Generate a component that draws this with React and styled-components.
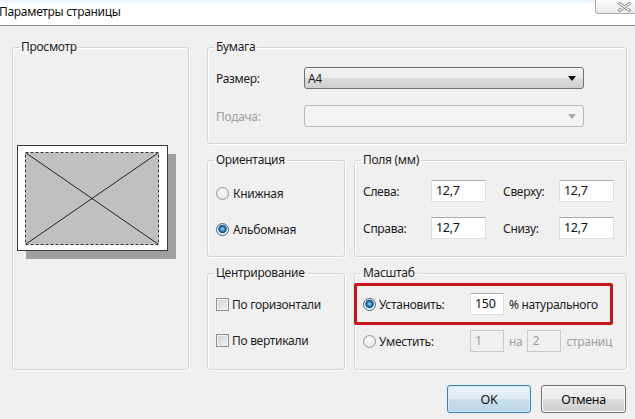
import React from "react";
import styled, { createGlobalStyle } from "styled-components";

const Global = createGlobalStyle`
  html, body {
    margin: 0;
    padding: 0;
    background: #f0f0f0;
  }
  body {
    width: 635px;
    height: 419px;
    overflow: hidden;
    font-family: "Noto Sans", "Open Sans", sans-serif;
    font-size: 12px;
    letter-spacing: -0.3px;
    color: #1e1e1e;
  }
`;

const Window = styled.div`
  width: 635px;
  height: 419px;
  display: flex;
  flex-direction: column;
  background: #f0f0f0;
`;

const TitleBar = styled.div`
  height: 25px;
  flex: none;
  display: flex;
  align-items: flex-start;
  background: linear-gradient(#e9f1f9 0px, #ffffff 4px, #ffffff 100%);
  border-bottom: 1px solid #8c8c8c;
`;

const Title = styled.div`
  line-height: 24px;
  font-size: 12px;
  margin-left: -1px;
  color: #111;
`;

const CloseButton = styled.div`
  margin-left: auto;
  width: 40px;
  height: 14px;
  border: 1px solid #a9a9a9;
  border-top: none;
  border-right: none;
  border-bottom-left-radius: 4px;
  background: linear-gradient(#fbfbfb, #ececec);
  display: flex;
  align-items: center;
  justify-content: flex-end;
  padding-right: 4px;
  box-sizing: border-box;
`;

const Body = styled.div`
  flex: 1;
  padding: 13px 8px 0 12px;
  display: flex;
  flex-direction: column;
`;

const MainGrid = styled.div`
  display: grid;
  grid-template-columns: 177px 420px;
  grid-template-rows: 105px 105px 105px;
  column-gap: 18px;
  row-gap: 8px;
`;

const SubRow = styled.div`
  display: grid;
  grid-template-columns: 138px 273px;
  column-gap: 9px;
`;

const Group = styled.fieldset`
  margin: 0;
  min-width: 0;
  box-sizing: border-box;
  height: 100%;
  border: 1px solid #d5d5d5;
  border-radius: 3px;
  box-shadow: inset 1px 1px 0 #ffffff, 1px 1px 0 #ffffff;
  padding: ${(p) => p.$pt || 12}px 8px 0 8px;
  grid-row: ${(p) => p.$span || "auto"};
`;

const Legend = styled.legend`
  padding: 0 2px;
  margin-left: -2px;
  line-height: 16px;
  color: #1e1e1e;
`;

const Preview = styled.svg`
  display: block;
  margin: 78px 0 0 -4px;
`;

const PaperGrid = styled.div`
  display: grid;
  grid-template-columns: 88px 280px;
  grid-auto-rows: 22px;
  row-gap: 16px;
  align-items: center;
`;

const Label = styled.span`
  color: ${(p) => (p.$disabled ? "#a0a0a0" : "#1e1e1e")};
  white-space: nowrap;
  flex: none;
  padding-left: ${(p) => p.$pl || 0}px;
`;

const Combo = styled.div`
  height: 22px;
  box-sizing: border-box;
  border: 1px solid ${(p) => (p.$disabled ? "#b9bcbe" : "#707070")};
  border-radius: 3px;
  background: ${(p) =>
    p.$disabled
      ? "#f4f4f4"
      : "linear-gradient(#f3f3f3 0%, #ebebeb 50%, #dddddd 51%, #cfcfcf 100%)"};
  display: flex;
  align-items: center;
  padding: 0 7px 0 3px;
`;

const ComboText = styled.span`
  flex: 1;
`;

const List = styled.div`
  display: flex;
  flex-direction: column;
  gap: 16px;
`;

const OptionRow = styled.div`
  height: 20px;
  display: flex;
  align-items: center;
  gap: ${(p) => p.$gap || 4}px;
`;

const Radio = styled.span`
  width: 13px;
  height: 13px;
  flex: none;
  box-sizing: border-box;
  border-radius: 50%;
  border: 1px solid ${(p) => (p.$checked ? "#3b6a8e" : "#969696")};
  background: ${(p) =>
    p.$checked
      ? "radial-gradient(circle at 50% 45%, #a6dcf7 0px, #2a7db6 2.3px, #1d4f75 3.8px, #e4eaee 4.6px, #ffffff 100%)"
      : "radial-gradient(circle at 50% 40%, #ffffff 0px, #dcdcdc 100%)"};
`;

const Check = styled.span`
  width: 13px;
  height: 13px;
  flex: none;
  box-sizing: border-box;
  border: 1px solid #8e8f8f;
  background: linear-gradient(135deg, #cfcfcf, #f4f4f4);
  box-shadow: inset 0 0 0 1px #f4f4f4;
`;

const MarginGrid = styled.div`
  display: grid;
  grid-template-columns: 68px 55px 73px 55px;
  grid-auto-rows: 22px;
  row-gap: 15px;
  align-items: center;
`;

const Field = styled.div`
  width: ${(p) => p.$w || 55}px;
  height: 22px;
  box-sizing: border-box;
  border: 1px solid ${(p) => (p.$disabled ? "#c9c9c9" : "#dbdfe6")};
  border-top-color: ${(p) => (p.$disabled ? "#c9c9c9" : "#abadb3")};
  background: ${(p) => (p.$disabled ? "#f0f0f0" : "#ffffff")};
  color: ${(p) => (p.$disabled ? "#a0a0a0" : "#111")};
  padding: 1px 0 0 4px;
  line-height: 17px;
  font-size: 12.5px;
  flex: none;
`;

const Highlight = styled.div`
  margin-left: -9px;
  width: 259px;
  height: 42px;
  box-sizing: border-box;
  border: 3px solid #c8141c;
  border-radius: 2px;
  padding-left: 6px;
  display: flex;
  align-items: center;
`;

const ScaleRow = styled.div`
  display: flex;
  align-items: center;
  gap: 5px;
  height: 22px;
  margin-top: ${(p) => p.$mt || 0}px;
`;

const RadioLabel = styled.div`
  display: flex;
  align-items: center;
  gap: 3px;
  width: 102px;
  flex: none;
`;

const Buttons = styled.div`
  display: flex;
  justify-content: flex-end;
  gap: 10px;
  margin-top: 15px;
  padding-right: 1px;
`;

const Button = styled.div`
  width: ${(p) => p.$w}px;
  height: 28px;
  box-sizing: border-box;
  border-radius: 3px;
  display: flex;
  align-items: center;
  justify-content: center;
  font-size: 12.5px;
  color: #111;
  border: 1px solid ${(p) => (p.$default ? "#3c7fb1" : "#707070")};
  background: ${(p) =>
    p.$default
      ? "linear-gradient(#eaf3fa 0%, #dbeaf5 50%, #c9dfee 51%, #bcd6ea 100%)"
      : "linear-gradient(#f2f2f2 0%, #ebebeb 50%, #dddddd 51%, #cfcfcf 100%)"};
  box-shadow: inset 0 0 0 1px ${(p) => (p.$default ? "#d6e9f7" : "#fbfbfb")};
`;

function Arrow({ disabled }) {
  return (
    <svg width="8" height="5" viewBox="0 0 8 5">
      <polygon points="0,0 8,0 4,5" fill={disabled ? "#a9a9a9" : "#111"} />
    </svg>
  );
}

function PagePreview() {
  return (
    <Preview width="162" height="116" viewBox="0 0 162 116">
      <rect x="9" y="9" width="150" height="105" fill="#a0a0a0" />
      <rect x="0.5" y="0.5" width="150" height="105" fill="#ffffff" stroke="#3a3a3a" />
      <rect
        x="8.5"
        y="7.5"
        width="133"
        height="92"
        fill="#c0c0c0"
        stroke="#333"
        strokeDasharray="3 2"
      />
      <line x1="9" y1="8" x2="141" y2="99" stroke="#111" strokeWidth="0.9" />
      <line x1="141" y1="8" x2="9" y2="99" stroke="#111" strokeWidth="0.9" />
    </Preview>
  );
}

export default function App() {
  return (
    <>
      <Global />
      <Window>
        <TitleBar>
          <Title>Параметры страницы</Title>
          <CloseButton>
            <svg width="13" height="10" viewBox="0 0 13 10">
              <path d="M1.5 1.5 L11.5 8.5 M11.5 1.5 L1.5 8.5" stroke="#8a8a8a" strokeWidth="3" strokeLinecap="round" />
              <path d="M1.5 1.5 L11.5 8.5 M11.5 1.5 L1.5 8.5" stroke="#f4f4f4" strokeWidth="1.4" strokeLinecap="round" />
            </svg>
          </CloseButton>
        </TitleBar>
        <Body>
          <MainGrid>
            <Group $span="1 / span 3" $pt={0}>
              <Legend>Просмотр</Legend>
              <PagePreview />
            </Group>

            <Group>
              <Legend>Бумага</Legend>
              <PaperGrid>
                <Label>Размер:</Label>
                <Combo>
                  <ComboText>A4</ComboText>
                  <Arrow />
                </Combo>
                <Label $disabled>Подача:</Label>
                <Combo $disabled>
                  <ComboText />
                  <Arrow disabled />
                </Combo>
              </PaperGrid>
            </Group>

            <SubRow>
              <Group $pt={15}>
                <Legend>Ориентация</Legend>
                <List>
                  <OptionRow>
                    <Radio />
                    <Label>Книжная</Label>
                  </OptionRow>
                  <OptionRow>
                    <Radio $checked />
                    <Label>Альбомная</Label>
                  </OptionRow>
                </List>
              </Group>
              <Group>
                <Legend>Поля (мм)</Legend>
                <MarginGrid>
                  <Label>Слева:</Label>
                  <Field>12,7</Field>
                  <Label $pl={17}>Сверху:</Label>
                  <Field>12,7</Field>
                  <Label>Справа:</Label>
                  <Field>12,7</Field>
                  <Label $pl={17}>Снизу:</Label>
                  <Field>12,7</Field>
                </MarginGrid>
              </Group>
            </SubRow>

            <SubRow>
              <Group $pt={13}>
                <Legend>Центрирование</Legend>
                <List>
                  <OptionRow $gap={3}>
                    <Check />
                    <Label>По горизонтали</Label>
                  </OptionRow>
                  <OptionRow $gap={3}>
                    <Check />
                    <Label>По вертикали</Label>
                  </OptionRow>
                </List>
              </Group>
              <Group $pt={2}>
                <Legend>Масштаб</Legend>
                <Highlight>
                  <ScaleRow>
                    <RadioLabel>
                      <Radio $checked />
                      <Label>Установить:</Label>
                    </RadioLabel>
                    <Field $w={34}>150</Field>
                    <Label>% натурального</Label>
                  </ScaleRow>
                </Highlight>
                <ScaleRow $mt={5}>
                  <RadioLabel>
                    <Radio />
                    <Label>Уместить:</Label>
                  </RadioLabel>
                  <Field $w={34} $disabled>1</Field>
                  <Label $disabled>на</Label>
                  <Field $w={34} $disabled>2</Field>
                  <Label $disabled>страниц</Label>
                </ScaleRow>
              </Group>
            </SubRow>
          </MainGrid>
          <Buttons>
            <Button $w={84} $default>OK</Button>
            <Button $w={85}>Отмена</Button>
          </Buttons>
        </Body>
      </Window>
    </>
  );
}
